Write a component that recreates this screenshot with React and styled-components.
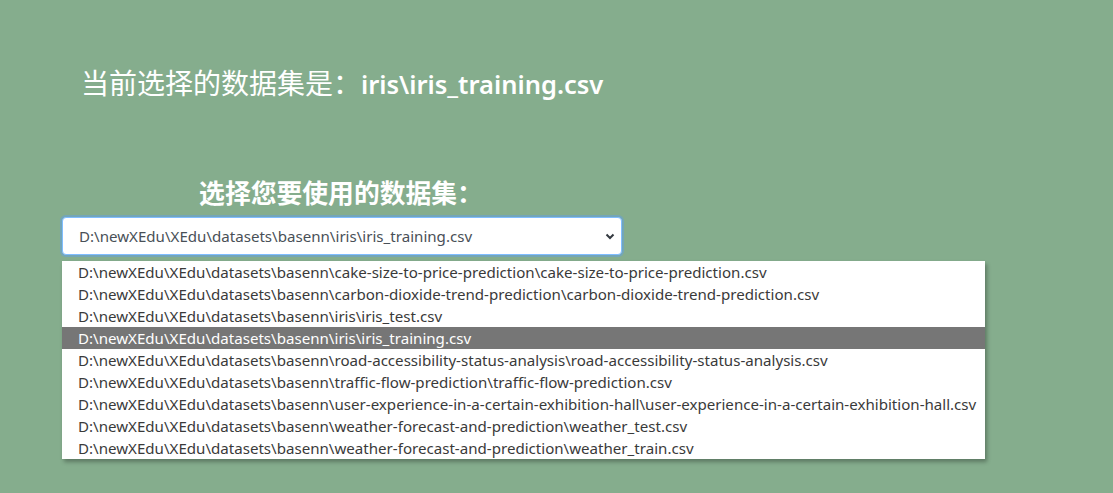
import React from "react";
import styled, { createGlobalStyle } from "styled-components";

const Global = createGlobalStyle`
  html, body { margin: 0; padding: 0; }
  body {
    background: #85ad8d;
    font-family: "Noto Sans", "Noto Sans CJK SC", sans-serif;
    width: 1113px;
    height: 493px;
    overflow: hidden;
  }
`;

const Page = styled.div`
  padding: 62px 0 0 81px;
`;

const Current = styled.h1`
  margin: 0;
  font-size: 28px;
  font-weight: 400;
  color: #fff;
  line-height: 40px;
  font-family: "Noto Sans CJK SC", sans-serif;
  b {
    font-family: "Noto Sans", sans-serif;
    font-size: 25.5px;
    font-weight: 600;
  }
`;

const Chooser = styled.div`
  margin: 72px 0 0 -19px;
  width: 560px;
`;

const ChooseLabel = styled.h2`
  margin: 0 0 9px;
  text-align: center;
  font-size: 25.8px;
  font-weight: 700;
  line-height: 32px;
  color: #fff;
  font-family: "Noto Sans CJK SC", sans-serif;
  padding-right: 2px;
`;

const SelectWrap = styled.div`
  position: relative;
`;

const SelectBox = styled.div`
  box-sizing: border-box;
  height: 38px;
  display: flex;
  align-items: center;
  justify-content: space-between;
  padding: 0 5px 0 16px;
  background: #fff;
  border: 1px solid #80bdff;
  border-radius: 4px;
  box-shadow: 0 0 0 2px rgba(100, 160, 220, 0.55);
  color: #495057;
  font-size: 15.1px;
`;

const Menu = styled.ul`
  position: absolute;
  left: 0;
  top: calc(100% + 6px);
  width: 923px;
  margin: 0;
  padding: 0;
  list-style: none;
  background: #fff;
  box-shadow: 2px 3px 4px rgba(0, 0, 0, 0.3);
  z-index: 2;
`;

const Item = styled.li`
  height: 22px;
  line-height: 22px;
  padding-left: 16px;
  font-size: 15.1px;
  white-space: nowrap;
  color: ${(p) => (p.$active ? "#fff" : "#3a3a3a")};
  background: ${(p) => (p.$active ? "#767676" : "transparent")};
`;

const base = "D:\\newXEdu\\XEdu\\datasets\\basenn\\";
const items = [
  "cake-size-to-price-prediction\\cake-size-to-price-prediction.csv",
  "carbon-dioxide-trend-prediction\\carbon-dioxide-trend-prediction.csv",
  "iris\\iris_test.csv",
  "iris\\iris_training.csv",
  "road-accessibility-status-analysis\\road-accessibility-status-analysis.csv",
  "traffic-flow-prediction\\traffic-flow-prediction.csv",
  "user-experience-in-a-certain-exhibition-hall\\user-experience-in-a-certain-exhibition-hall.csv",
  "weather-forecast-and-prediction\\weather_test.csv",
  "weather-forecast-and-prediction\\weather_train.csv",
];

const Chevron = () => (
  <svg width="12" height="12" viewBox="0 0 12 12">
    <path d="M2.5 4.5 L6 8 L9.5 4.5" fill="none" stroke="#343a40" strokeWidth="2" />
  </svg>
);

export default function App() {
  return (
    <>
      <Global />
      <Page>
        <Current>
          当前选择的数据集是：<b>iris\iris_training.csv</b>
        </Current>
        <Chooser>
          <ChooseLabel>选择您要使用的数据集：</ChooseLabel>
          <SelectWrap>
            <SelectBox>
              <span>{base}iris\iris_training.csv</span>
              <Chevron />
            </SelectBox>
            <Menu>
              {items.map((it, i) => (
                <Item key={i} $active={i === 3}>
                  {base}
                  {it}
                </Item>
              ))}
            </Menu>
          </SelectWrap>
        </Chooser>
      </Page>
    </>
  );
}
